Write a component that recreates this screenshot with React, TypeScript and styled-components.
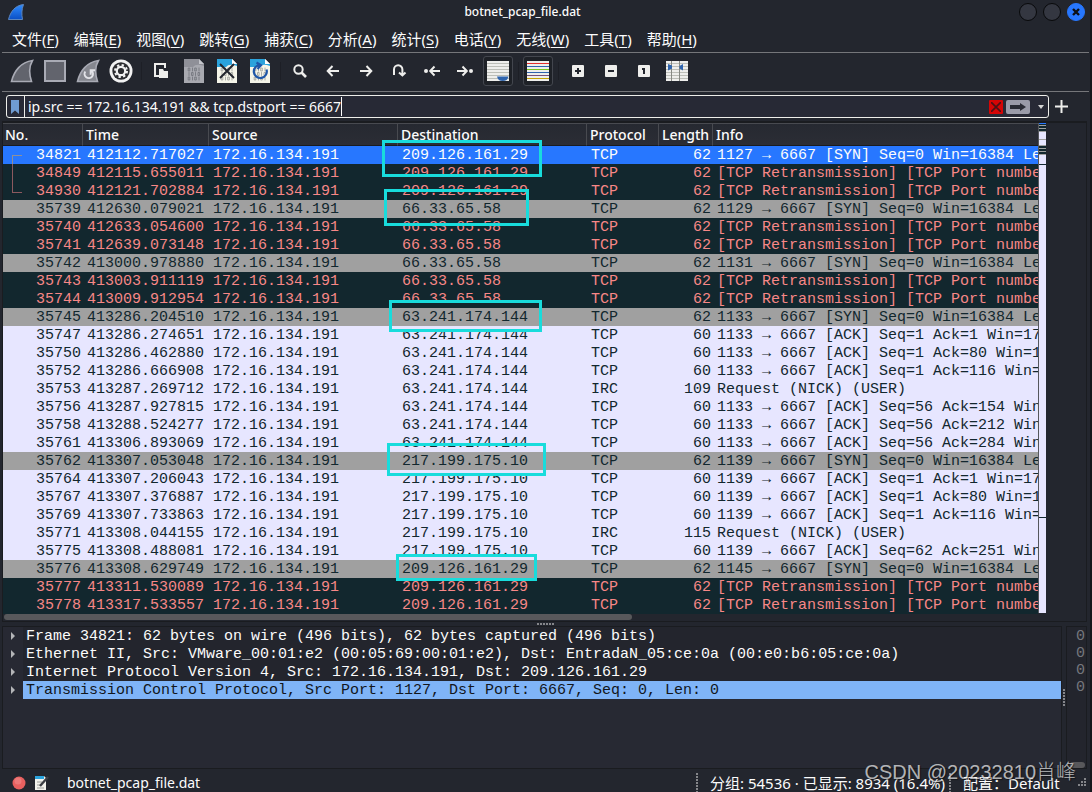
import React from "react";
import styled, { createGlobalStyle, css } from "styled-components";

const Global = createGlobalStyle`
  * { box-sizing: border-box; }
  html, body { margin: 0; background: #23262e; }
  body {
    font-family: "Noto Sans", "Noto Sans CJK SC", sans-serif;
    font-size: 14px;
    color: #fcfcfc;
    overflow: hidden;
  }
  button { font: inherit; color: inherit; background: none; border: 0; padding: 0; }
  svg { display: block; }
`;

const mono = css`
  font-family: "Liberation Mono", "DejaVu Sans Mono", monospace;
  font-size: 15px;
  line-height: 16px;
`;

const Window = styled.div`
  position: relative;
  display: flex;
  flex-direction: column;
  height: 100vh;
  background: #23262e;
  border-right: 2px solid #15181d;
`;

/* Title bar */
const TitleBar = styled.header`
  display: flex;
  align-items: center;
  height: 24px;
  flex: none;
  padding: 0 5px 0 8px;
`;
const Title = styled.h1`
  flex: 1;
  margin: 0;
  text-align: center;
  font-size: 12px;
  line-height: 24px;
  font-weight: 500;
`;
const WindowButtons = styled.div`
  display: flex;
  gap: 6px;
`;
const RoundButton = styled.button<{ $active?: boolean }>`
  display: grid;
  place-items: center;
  width: 18px;
  height: 18px;
  border-radius: 50%;
  border: 1px solid ${(p) => (p.$active ? "#2777ff" : "#08090b")};
  background: ${(p) => (p.$active ? "#2777ff" : "#343741")};
`;

/* Menu */
const MenuBar = styled.nav`
  display: flex;
  flex: none;
  gap: 15px;
  height: 28px;
  padding: 0 12px;
`;
const MenuButton = styled.button`
  line-height: 30px;
  font-size: 15px;
  white-space: nowrap;
  u { text-underline-offset: 2px; }
`;

/* Tool bar */
const ToolBar = styled.div`
  display: flex;
  flex: none;
  align-items: center;
  gap: 3px;
  height: 40px;
  margin: 0 1px 0 2px;
  padding: 0 5px 2px;
  border-top: 1px solid #75767a;
  border-bottom: 1px solid #75767a;
`;
const ToolButton = styled.button<{ $checked?: boolean }>`
  display: grid;
  place-items: center;
  width: 30px;
  height: 30px;
  border-radius: 3px;
  border: 1px solid ${(p) => (p.$checked ? "#43464e" : "transparent")};
  background: ${(p) => (p.$checked ? "#1e2127" : "transparent")};
`;
const ToolGap = styled.span`
  width: 4px;
  height: 18px;
  background: linear-gradient(#1d1f26, #1d1f26) center / 1px 100% no-repeat;
`;

/* Filter */
const FilterRow = styled.form`
  display: flex;
  flex: none;
  align-items: center;
  gap: 6px;
  height: 29px;
  padding: 0 22px 0 6px;
`;
const FilterField = styled.div`
  display: flex;
  flex: 1;
  align-items: center;
  height: 23px;
  border: 1px solid #eeeeea;
  border-radius: 3px;
  background: #272935;
`;
const Bookmark = styled.button`
  display: grid;
  place-items: center;
  width: 18px;
  height: 21px;
  padding-right: 2px;
  border-right: 1px solid #eeeeea;
`;
const FilterInput = styled.input`
  field-sizing: content;
  height: 21px;
  padding: 0;
  margin-left: 3px;
  border: 0;
  outline: 0;
  background: none;
  color: inherit;
  font: inherit;
  line-height: 21px;
`;
const Caret = styled.span`
  width: 1px;
  height: 19px;
  background: #fcfcfc;
`;
const FilterActions = styled.div`
  display: flex;
  align-items: center;
  gap: 3px;
  margin-left: auto;
  padding-right: 3px;
`;
const ClearButton = styled.button`
  display: grid;
  place-items: center;
  width: 14px;
  height: 14px;
  border-radius: 1px;
  background: #d50505;
`;
const ApplyButton = styled.button`
  display: grid;
  place-items: center;
  width: 24px;
  height: 14px;
  margin-right: 4px;
  border-radius: 2px;
  background: #9a9ba8;
`;

/* Packet list */
const PacketPane = styled.section`
  flex: none;
  margin: 0 3px 0 2px;
  border: 1px solid #1a1c20;
  border-top-width: 2px;
`;
const PacketBody = styled.div`
  position: relative;
  display: flex;
  padding-right: 40px;
`;
const PacketView = styled.div`
  flex: 1;
  min-width: 0;
  height: 491px;
  overflow: hidden;
`;
const PacketTable = styled.table`
  width: 100%;
  table-layout: fixed;
  border-collapse: separate;
  border-spacing: 0;
`;
const HeadCell = styled.th<{ $w?: number }>`
  width: ${(p) => (p.$w ? `${p.$w}px` : "auto")};
  height: 23px;
  padding: 0 0 0 3px;
  text-align: left;
  font-weight: 500;
  line-height: 20px;
  background: linear-gradient(#262931, #2b2d35);
  border-top: 1px solid #484a50;
  border-right: ${(p) => (p.$w ? "1px solid #484a50" : "0")};
  border-bottom: 1px solid #1a1c20;
  &:first-child { padding-left: 2px; }
`;
type Kind = "sel" | "bad" | "syn" | "ack";
const kinds: Record<Kind, { bg: string; fg: string }> = {
  sel: { bg: "#2777ff", fg: "#fcfcfc" },
  bad: { bg: "#12272e", fg: "#f78787" },
  syn: { bg: "#a0a0a0", fg: "#12272e" },
  ack: { bg: "#e7e6ff", fg: "#12272e" },
};
const PacketRow = styled.tr<{ $kind: Kind }>`
  background: ${(p) => kinds[p.$kind].bg};
  color: ${(p) => kinds[p.$kind].fg};
`;
const Cell = styled.td<{ $right?: boolean; $link?: "start" | "mid" | "end" }>`
  ${mono}
  position: relative;
  height: 18px;
  padding: 2px ${(p) => (p.$right ? 2 : 0)}px 0 4px;
  text-align: ${(p) => (p.$right ? "right" : "left")};
  white-space: pre;
  overflow: hidden;
  ${(p) =>
    p.$link &&
    css`
      &::before {
        content: "";
        position: absolute;
        left: 9px;
        width: ${p.$link === "mid" ? 1 : 9}px;
        top: ${p.$link === "start" ? 9 : 0}px;
        height: ${p.$link === "mid" ? 18 : p.$link === "start" ? 9 : 10}px;
        border: 0 solid ${p.$link === "start" ? "#8f9098" : "#8d595f"};
        border-left-width: 1px;
        border-top-width: ${p.$link === "start" ? 1 : 0}px;
        border-bottom-width: ${p.$link === "end" ? 1 : 0}px;
      }
    `}
`;
const MiniMap = styled.svg`
  flex: none;
  width: 8px;
  height: 490px;
`;
const Callout = styled.div<{ $x: number; $y: number; $w: number; $h: number }>`
  position: absolute;
  left: ${(p) => p.$x}px;
  top: ${(p) => p.$y}px;
  width: ${(p) => p.$w}px;
  height: ${(p) => p.$h}px;
  border: 3px solid #18dcdc;
`;
const ScrollTrack = styled.div`
  height: 7px;
  padding: 0 0 1px 1px;
`;
const ScrollThumb = styled.div<{ $w: string }>`
  width: ${(p) => p.$w};
  height: 6px;
  border-radius: 3px;
  background: #58585b;
`;
const Splitter = styled.div<{ $vertical?: boolean }>`
  flex: none;
  display: grid;
  place-items: center;
  ${(p) => (p.$vertical ? "width: 4px;" : "height: 4px;")}
  &::after {
    content: "";
    width: ${(p) => (p.$vertical ? 2 : 17)}px;
    height: ${(p) => (p.$vertical ? 17 : 2)}px;
    background: repeating-linear-gradient(
      ${(p) => (p.$vertical ? "180deg" : "90deg")},
      #85868a 0 2px, transparent 2px 3px
    );
  }
`;

/* Details and bytes */
const LowerPanes = styled.div`
  display: flex;
  flex: 1;
  min-height: 0;
  margin: 0 3px 0 2px;
`;
const DetailPane = styled.ul`
  flex: 1;
  min-width: 0;
  margin: 0;
  padding: 0;
  list-style: none;
  overflow: hidden;
  background: #272933;
  border: 1px solid #1a1c20;
`;
const DetailRow = styled.li`
  display: flex;
`;
const Expander = styled.button`
  display: grid;
  place-items: center;
  width: 20px;
  height: 18px;
`;
const DetailText = styled.span<{ $selected?: boolean }>`
  ${mono}
  flex: 1;
  padding: 2px 0 0 3px;
  white-space: pre;
  background: ${(p) => (p.$selected ? "#7fb4f7" : "#23252d")};
  color: ${(p) => (p.$selected ? "#12161c" : "#fcfcfc")};
`;
const BytesPane = styled.div`
  ${mono}
  display: flex;
  flex-direction: column;
  width: 21px;
  line-height: 17px;
  padding: 1px 1px 0 3px;
  color: #75777c;
  background: #23252d;
  border: 1px solid #1a1c20;
  text-align: right;
  overflow: hidden;
`;
const BytesThumb = styled(ScrollThumb)`
  margin-top: auto;
`;

/* Status bar */
const StatusBar = styled.footer`
  display: flex;
  flex: none;
  align-items: center;
  height: 23px;
  padding: 4px 3px 0 12px;
  white-space: nowrap;
`;
const StatusButton = styled.button`
  margin-right: 9px;
`;
const FileName = styled.span`
  flex: 1;
  padding-left: 9px;
`;
const StatusText = styled.span<{ $w: number }>`
  width: ${(p) => p.$w}px;
  padding-left: 14px;
  font-size: 15px;
  line-height: 20px;
  background: repeating-linear-gradient(#85868a 0 2px, transparent 2px 3px) left top / 2px 100% no-repeat;
`;
const Watermark = styled.div`
  position: absolute;
  right: 14px;
  bottom: 6px;
  font-family: "Liberation Sans", "Noto Sans CJK SC", sans-serif;
  font-size: 20px;
  line-height: 28px;
  font-weight: 300;
  color: rgba(255, 255, 255, 0.68);
  text-shadow: 1px 1px 1px rgba(0, 0, 0, 0.5);
`;

const menus: [string, string][] = [
  ["文件", "F"], ["编辑", "E"], ["视图", "V"], ["跳转", "G"], ["捕获", "C"], ["分析", "A"],
  ["统计", "S"], ["电话", "Y"], ["无线", "W"], ["工具", "T"], ["帮助", "H"],
];

const Fin = ({ restart }: { restart?: boolean }) => (
  <svg width="24" height="24" viewBox="0 0 24 24">
    <path d="M1.5 22.5C4 12 11 3 22.5 1.5C18.500 8 19 15 21.500 22.500Z" fill={restart ? "#85878f" : "#62646d"} stroke="#a9abb5" strokeWidth="1.600" />
    {restart && (
      <path d="M9.300 12.500a4.200 4.200 0 1 0 6.200-.8M19 11.300h-4.300v4.400" fill="none" stroke="#e2e3e8" strokeWidth="2" />
    )}
  </svg>
);

const FileSheet = ({ kind }: { kind: "save" | "close" | "reload" }) => {
  const dim = kind === "save";
  return (
    <svg width="20" height="24" viewBox="0 0 20 24">
      <path d="M0 0H15L20 5V24H0Z" fill={dim ? "#a8a9b0" : "#f5f5e9"} />
      <path d="M0 0H15V5H20V7Q12 4 9 8H0Z" fill={dim ? "#8f9098" : "#2ba3dc"} />
      <path d="M15 0L20 5H15Z" fill={dim ? "#c4c5cb" : "#fff"} />
      <g fill="none" stroke={dim ? "#6f7179" : "#9b9c98"} strokeWidth="0.800">
        {[9, 13.5, 18].map((y, i) => (
          <g key={y}>
            <path d={`M${i === 1 ? 7.500 : 4.200} ${y}h1.600v3h-1.600zM${i === 1 ? 14 : 10.700} ${y}h1.600v3h-1.600z`} />
            <path d={`M${i === 1 ? 5 : 8.500} ${y - 0.4}v3.800M${i === 1 ? 11.500 : 15} ${y - 0.4}v3.800`} />
          </g>
        ))}
      </g>
      {kind === "close" && <path d="M3 5L17 19M17 5L3 19" stroke="#23262e" strokeWidth="2" />}
      {kind === "reload" && (
        <path d="M16.500 10.500a6.500 6.500 0 1 1-6-4.500M6.500 3.500l4.500 2.700-3.500 3.800" fill="none" stroke="#1f57a8" strokeWidth="2.200" />
      )}
    </svg>
  );
};

const Glyph = ({ d, dot }: { d: string; dot?: number }) => (
  <svg width="18" height="16" viewBox="0 0 18 16">
    <path d={d} fill="none" stroke="#eeeeec" strokeWidth="2" />
    {dot !== undefined && <circle cx={dot} cy="8" r="2" fill="#eeeeec" />}
  </svg>
);

const Tile = ({ d }: { d: string }) => (
  <svg width="12" height="12" viewBox="0 0 12 12">
    <rect width="12" height="12" rx="1" fill="#eeeeec" />
    <path d={d} fill="none" stroke="#23262e" strokeWidth="2" />
  </svg>
);

const lineColors = ["#e32f2f", "#2f64ad", "#78c41f", "#2f64ad", "#75507b", "#c4a000"];
const Lines = ({ kind }: { kind: "auto" | "color" | "cols" }) => (
  <svg width="22" height="20" viewBox="0 0 22 20">
    <rect width="22" height="20" fill="#eeeeec" />
    {lineColors.map((c, i) => (
      <rect key={i} y={2 + i * 3} width="22" height="1" fill={kind === "color" ? c : "#bcbeb8"} />
    ))}
    {kind === "auto" && <path d="M10 15.500H21.500Q20.500 20 15.700 20Q11 20 10 15.500Z" fill="#2f64ad" />}
    {kind === "cols" && (
      <>
        <path d="M5.500 0V20M13.500 0V20" stroke="#888a85" />
        <path d="M2 3L6 4.500V7.500L2 9.500ZM17 3L13.500 5V7.500L17 9.500Z" fill="#2f64ad" />
      </>
    )}
  </svg>
);

type Tool = { name: string; icon: React.ReactNode; checked?: boolean } | null;
const tools: Tool[] = [
  { name: "开始", icon: <Fin /> },
  { name: "停止", icon: <svg width="22" height="22"><rect x="1" y="1" width="20" height="20" fill="#62646d" stroke="#a9abb5" strokeWidth="2" /></svg> },
  { name: "重新开始", icon: <Fin restart /> },
  {
    name: "选项",
    icon: (
      <svg width="24" height="24" viewBox="0 0 24 24">
        <circle cx="12" cy="12" r="11.500" fill="#f2f2f2" />
        <circle cx="12" cy="12" r="8.700" fill="#2b2c30" />
        <circle cx="12" cy="12" r="4.200" fill="none" stroke="#f2f2f2" strokeWidth="2.200" />
        <circle cx="12" cy="12" r="6" fill="none" stroke="#f2f2f2" strokeWidth="2" strokeDasharray="2.350 2.350" />
      </svg>
    ),
  },
  null,
  {
    name: "打开",
    icon: (
      <svg width="15" height="16" viewBox="0 0 15 16">
        <path d="M5 13H1V1H11V5" fill="none" stroke="#eeeeec" strokeWidth="2" />
        <path d="M5 6H9L10 8H14V15H5Z" fill="#eeeeec" />
      </svg>
    ),
  },
  { name: "保存", icon: <FileSheet kind="save" /> },
  { name: "关闭", icon: <FileSheet kind="close" /> },
  { name: "重新加载", icon: <FileSheet kind="reload" /> },
  null,
  {
    name: "查找",
    icon: (
      <svg width="14" height="14" viewBox="0 0 14 14">
        <circle cx="5.500" cy="5.500" r="4.200" fill="none" stroke="#eeeeec" strokeWidth="2" />
        <path d="M8.500 8.500L13 13" stroke="#eeeeec" strokeWidth="2.600" />
      </svg>
    ),
  },
  { name: "后退", icon: <Glyph d="M15 8H4M8.500 3L3.700 8L8.500 13" /> },
  { name: "前进", icon: <Glyph d="M3 8H14M9.500 3L14.300 8L9.500 13" /> },
  { name: "跳转到", icon: <Glyph d="M4 12V6.500a4.200 4.200 0 0 1 8.400 0V12M9 9.500L12.400 12.500L15.500 9.500" /> },
  { name: "首个", icon: <Glyph d="M17 8H8M11.500 3.500L7.200 8L11.500 12.500" dot={3} /> },
  { name: "末个", icon: <Glyph d="M1 8H10M6.500 3.500L10.800 8L6.500 12.500" dot={15} /> },
  { name: "自动滚动", icon: <Lines kind="auto" />, checked: true },
  null,
  { name: "着色", icon: <Lines kind="color" />, checked: true },
  null,
  { name: "放大", icon: <Tile d="M3 6H9M6 3V9" /> },
  { name: "缩小", icon: <Tile d="M3 6H9" /> },
  { name: "正常大小", icon: <Tile d="M4 4H6V9" /> },
  { name: "调整列宽", icon: <Lines kind="cols" /> },
];

type Packet = [number, string, string, string, number, string, Kind];
const S = (port: number) => `${port} → 6667 [SYN] Seq=0 Win=16384 Len=0`;
const A = (port: number, rest: string) => `${port} → 6667 [ACK] ${rest}`;
const R = "[TCP Retransmission] [TCP Port numbers reused]";
const D1 = "209.126.161.29";
const D2 = "66.33.65.58";
const D3 = "63.241.174.144";
const D4 = "217.199.175.10";
const packets: Packet[] = [
  [34821, "412112.717027", D1, "TCP", 62, S(1127), "sel"],
  [34849, "412115.655011", D1, "TCP", 62, R, "bad"],
  [34930, "412121.702884", D1, "TCP", 62, R, "bad"],
  [35739, "412630.079021", D2, "TCP", 62, S(1129), "syn"],
  [35740, "412633.054600", D2, "TCP", 62, R, "bad"],
  [35741, "412639.073148", D2, "TCP", 62, R, "bad"],
  [35742, "413000.978880", D2, "TCP", 62, S(1131), "syn"],
  [35743, "413003.911119", D2, "TCP", 62, R, "bad"],
  [35744, "413009.912954", D2, "TCP", 62, R, "bad"],
  [35745, "413286.204510", D3, "TCP", 62, S(1133), "syn"],
  [35747, "413286.274651", D3, "TCP", 60, A(1133, "Seq=1 Ack=1 Win=17520"), "ack"],
  [35750, "413286.462880", D3, "TCP", 60, A(1133, "Seq=1 Ack=80 Win=17441"), "ack"],
  [35752, "413286.666908", D3, "TCP", 60, A(1133, "Seq=1 Ack=116 Win=17405"), "ack"],
  [35753, "413287.269712", D3, "IRC", 109, "Request (NICK) (USER)", "ack"],
  [35756, "413287.927815", D3, "TCP", 60, A(1133, "Seq=56 Ack=154 Win=17367"), "ack"],
  [35758, "413288.524277", D3, "TCP", 60, A(1133, "Seq=56 Ack=212 Win=17309"), "ack"],
  [35761, "413306.893069", D3, "TCP", 60, A(1133, "Seq=56 Ack=284 Win=17237"), "ack"],
  [35762, "413307.053048", D4, "TCP", 62, S(1139), "syn"],
  [35764, "413307.206043", D4, "TCP", 60, A(1139, "Seq=1 Ack=1 Win=17520"), "ack"],
  [35767, "413307.376887", D4, "TCP", 60, A(1139, "Seq=1 Ack=80 Win=17441"), "ack"],
  [35769, "413307.733863", D4, "TCP", 60, A(1139, "Seq=1 Ack=116 Win=17405"), "ack"],
  [35771, "413308.044155", D4, "IRC", 115, "Request (NICK) (USER)", "ack"],
  [35775, "413308.488081", D4, "TCP", 60, A(1139, "Seq=62 Ack=251 Win=17270"), "ack"],
  [35776, "413308.629749", D1, "TCP", 62, S(1145), "syn"],
  [35777, "413311.530089", D1, "TCP", 62, R, "bad"],
  [35778, "413317.533557", D1, "TCP", 62, R, "bad"],
];
const links = ["start", "mid", "end"] as const;

const details = [
  "Frame 34821: 62 bytes on wire (496 bits), 62 bytes captured (496 bits)",
  "Ethernet II, Src: VMware_00:01:e2 (00:05:69:00:01:e2), Dst: EntradaN_05:ce:0a (00:e0:b6:05:ce:0a)",
  "Internet Protocol Version 4, Src: 172.16.134.191, Dst: 209.126.161.29",
  "Transmission Control Protocol, Src Port: 1127, Dst Port: 6667, Seq: 0, Len: 0",
];

/* Bands of the overview strip: top, height, colour */
const bands: [number, number, string][] = [
  [0, 1, "#2777ff"], [1, 7, "#12272e"], [2, 1, "#a0a0a0"], [5, 1, "#a0a0a0"], [8, 1, "#a0a0a0"],
  [16, 1, "#a0a0a0"], [22, 1, "#a0a0a0"], [23, 8, "#12272e"], [25, 1, "#a0a0a0"], [28, 1, "#a0a0a0"],
  [31, 1, "#a0a0a0"], [41, 1, "#12272e"], [394, 1, "#12272e"],
];

export default function App() {
  const [filter, setFilter] = React.useState("ip.src == 172.16.134.191 && tcp.dstport == 6667");
  return (
    <Window>
      <Global />
      <TitleBar>
        <svg width="18" height="18" viewBox="0 0 18 18">
          <defs>
            <linearGradient id="fin" x1="0" y1="0" x2="0" y2="1">
              <stop offset="0" stopColor="#2f8cff" />
              <stop offset="1" stopColor="#0a4fc4" />
            </linearGradient>
          </defs>
          <path d="M.5 16.500C2.500 8.500 7 2.500 15.500 1.500C13.500 6.500 13.500 11.500 14.500 16.500Z" fill="url(#fin)" stroke="#5d86bd" />
        </svg>
        <Title>botnet_pcap_file.dat</Title>
        <WindowButtons>
          <RoundButton aria-label="最小化" />
          <RoundButton aria-label="最大化" />
          <RoundButton $active aria-label="关闭窗口">
            <svg width="8" height="8"><path d="M1 1L7 7M7 1L1 7" stroke="#0d1017" strokeWidth="2.400" /></svg>
          </RoundButton>
        </WindowButtons>
      </TitleBar>
      <MenuBar>
        {menus.map(([label, key]) => (
          <MenuButton key={key}>{label}(<u>{key}</u>)</MenuButton>
        ))}
      </MenuBar>
      <ToolBar role="toolbar">
        {tools.map((t, i) =>
          t ? <ToolButton key={i} aria-label={t.name} $checked={t.checked}>{t.icon}</ToolButton> : <ToolGap key={i} />
        )}
      </ToolBar>
      <FilterRow onSubmit={(e) => e.preventDefault()}>
        <FilterField>
          <Bookmark type="button" aria-label="书签">
            <svg width="8" height="14"><path d="M0 0H8V14L4 10.500L0 14Z" fill="#6f9bd1" /></svg>
          </Bookmark>
          <FilterInput aria-label="显示过滤器" value={filter} onChange={(e) => setFilter(e.target.value)} />
          <Caret />
          <FilterActions>
            <ClearButton type="button" aria-label="清除">
              <svg width="10" height="10"><path d="M0 0L10 10M10 0L0 10" stroke="#4a1216" strokeWidth="1.600" /></svg>
            </ClearButton>
            <ApplyButton aria-label="应用">
              <svg width="16" height="8"><path d="M0 2H10V0L16 4L10 8V6H0Z" fill="#2a2c35" /></svg>
            </ApplyButton>
            <button type="button" aria-label="历史">
              <svg width="8" height="4"><path d="M1 0H7L4 4Z" fill="#d4d4d4" /></svg>
            </button>
          </FilterActions>
        </FilterField>
        <button type="button" aria-label="添加">
          <svg width="13" height="13"><path d="M0 6.500H13M6.500 0V13" stroke="#eeeeec" strokeWidth="2" /></svg>
        </button>
      </FilterRow>
      <PacketPane>
        <PacketBody>
          <PacketView>
            <PacketTable>
              <thead>
                <tr>
                  <HeadCell $w={80}>No.</HeadCell>
                  <HeadCell $w={126}>Time</HeadCell>
                  <HeadCell $w={189}>Source</HeadCell>
                  <HeadCell $w={189}>Destination</HeadCell>
                  <HeadCell $w={72}>Protocol</HeadCell>
                  <HeadCell $w={54}>Length</HeadCell>
                  <HeadCell>Info</HeadCell>
                </tr>
              </thead>
              <tbody>
                {packets.map(([no, time, dst, proto, len, info, kind], i) => (
                  <PacketRow key={no} $kind={kind}>
                    <Cell $right $link={links[i]}>{no}</Cell>
                    <Cell>{time}</Cell>
                    <Cell>172.16.134.191</Cell>
                    <Cell>{dst}</Cell>
                    <Cell>{proto}</Cell>
                    <Cell $right>{len}</Cell>
                    <Cell>{info}</Cell>
                  </PacketRow>
                ))}
              </tbody>
            </PacketTable>
          </PacketView>
          <MiniMap>
            <rect width="1" height="490" fill="#55575c" />
            <rect x="1" width="7" height="490" fill="#e7e6ff" />
            {bands.map(([y, h, c]) => <rect key={y} x="1" y={y} width="7" height={h} fill={c} />)}
          </MiniMap>
          <Callout $x={379} $y={17} $w={160} $h={37} />
          <Callout $x={381} $y={66} $w={145} $h={37} />
          <Callout $x={386} $y={177} $w={153} $h={32} />
          <Callout $x={384} $y={320} $w={159} $h={33} />
          <Callout $x={393} $y={431} $w={141} $h={27} />
        </PacketBody>
        <ScrollTrack><ScrollThumb $w="58%" /></ScrollTrack>
      </PacketPane>
      <Splitter />
      <LowerPanes>
        <DetailPane>
          {details.map((d, i) => (
            <DetailRow key={d}>
              <Expander aria-label="展开">
                <svg width="4" height="8"><path d="M0 0L4 4L0 8Z" fill="#b4b5b8" /></svg>
              </Expander>
              <DetailText $selected={i === 3}>{d}</DetailText>
            </DetailRow>
          ))}
        </DetailPane>
        <Splitter $vertical />
        <BytesPane>
          <span>0</span><span>0</span><span>0</span><span>0</span>
          <BytesThumb $w="100%" />
        </BytesPane>
      </LowerPanes>
      <StatusBar>
        <StatusButton aria-label="专家信息">
          <svg width="14" height="14"><circle cx="7" cy="7" r="6.500" fill="#e8605f" /><circle cx="6" cy="5" r="3.500" fill="#f08a88" opacity=".6" /></svg>
        </StatusButton>
        <StatusButton aria-label="捕获注释">
          <svg width="14" height="14" viewBox="0 0 14 14">
            <path d="M0 0H9L11 2V14H0Z" fill="#f2f2ec" />
            <path d="M0 0H9V3H0Z" fill="#2ba3dc" />
            <path d="M2 6h5M2 9h3M2 12h7" stroke="#9a9b98" />
            <path d="M5 10L13 1" stroke="#3a3c42" strokeWidth="2.400" />
          </svg>
        </StatusButton>
        <FileName>botnet_pcap_file.dat</FileName>
        <StatusText $w={253}>分组: 54536 · 已显示: 8934 (16.4%)</StatusText>
        <StatusText $w={129}>配置：Default</StatusText>
        <svg width="9" height="9" fill="#85868a"><path d="M6 0h2v2h-2zM3 3h2v2h-2zM6 3h2v2h-2zM0 6h2v2h-2zM3 6h2v2h-2zM6 6h2v2h-2z" /></svg>
      </StatusBar>
      <Watermark>CSDN @20232810肖峰</Watermark>
    </Window>
  );
}
